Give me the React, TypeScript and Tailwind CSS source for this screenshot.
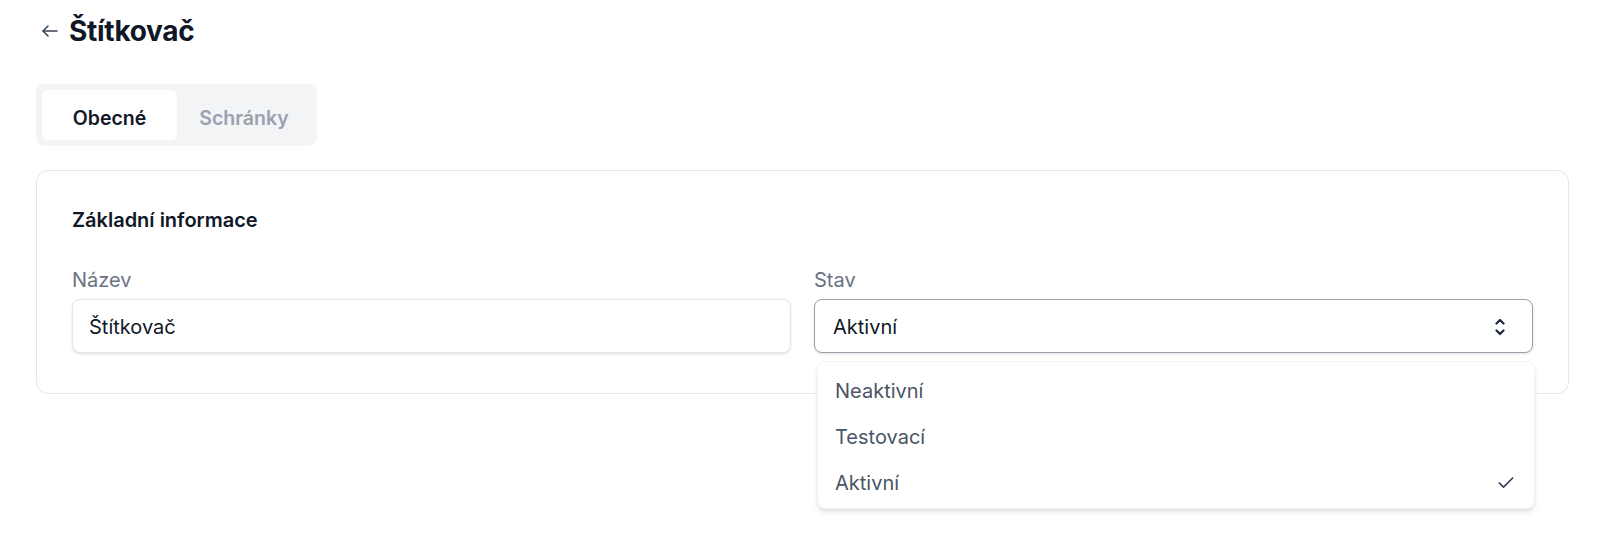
import { Check } from "lucide-react";

const options = ["Neaktivní", "Testovací", "Aktivní"];

export default function App() {
  const selected = "Aktivní";

  return (
    <div className="min-h-[550px] bg-white pl-[36px] pr-[38px] pt-[14px] font-['Inter',sans-serif] text-gray-900">
      {/* hlavička */}
      <div className="flex h-[34px] items-center">
        <button className="ml-[6px] mr-[11px] text-gray-700">
          <svg width="16" height="12" viewBox="0 0 16 12" fill="none" stroke="currentColor" strokeWidth="1.5" strokeLinecap="round" strokeLinejoin="round">
            <path d="M15 6H1" />
            <path d="M6 1L1 6l5 5" />
          </svg>
        </button>
        <h1 className="text-[28px] font-bold leading-[34px] tracking-[-0.01em]">Štítkovač</h1>
      </div>

      {/* záložky */}
      <div className="mt-[36px] inline-flex rounded-lg bg-gray-100 p-[6px]">
        <button className="h-[50px] w-[135px] rounded-md bg-white pt-[7px] text-[19.5px] font-semibold text-gray-900">
          Obecné
        </button>
        <button className="h-[50px] w-[134px] rounded-md pt-[7px] text-[19.5px] font-semibold text-gray-400">
          Schránky
        </button>
      </div>

      {/* karta */}
      <div className="mt-[24px] rounded-xl border border-gray-200 px-[35px] pb-[40px] pt-[35px]">
        <h2 className="text-[20px] font-semibold leading-[28px]">Základní informace</h2>

        <div className="mt-[32px] grid grid-cols-2 gap-[23px]">
          <div>
            <label className="block text-[20px] leading-[28px] text-gray-500">Název</label>
            <div className="mt-[5px] flex h-[54px] items-center rounded-lg border border-gray-200 bg-white px-4 pt-[2px] text-[20px] shadow-sm">
              Štítkovač
            </div>
          </div>

          <div>
            <label className="block text-[20px] leading-[28px] text-gray-500">Stav</label>
            <div className="relative mt-[5px]">
              <div className="flex h-[54px] items-center justify-between rounded-lg border border-gray-400 bg-white pl-[18px] pr-[27px] pt-[2px] text-[20px] shadow-sm">
                <span>{selected}</span>
                <svg width="10" height="20" viewBox="0 0 10 20" fill="none" stroke="currentColor" strokeWidth="2.2" strokeLinecap="round" strokeLinejoin="round" className="text-gray-800">
                  <path d="M1.5 6.5L5 3l3.5 3.5" />
                  <path d="M1.5 13.5L5 17l3.5-3.5" />
                </svg>
              </div>

              {/* rozbalený seznam */}
              <ul className="absolute left-[3px] right-[-2px] top-[62px] z-10 rounded-lg border border-gray-100 bg-white py-[4px] shadow-md">
                {options.map((o) => (
                  <li
                    key={o}
                    className="flex h-[46px] items-center justify-between pl-[17px] pr-[18px] pt-[4px] text-[20px] text-gray-600"
                  >
                    <span>{o}</span>
                    {o === selected && <Check size={20} strokeWidth={2} className="text-gray-700" />}
                  </li>
                ))}
              </ul>
            </div>
          </div>
        </div>
      </div>
    </div>
  );
}
